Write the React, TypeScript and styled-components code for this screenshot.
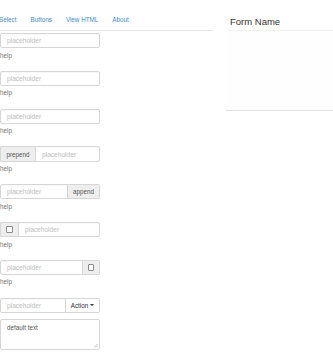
import React from "react";
import styled, { createGlobalStyle } from "styled-components";

const GlobalStyle = createGlobalStyle`
  html, body {
    margin: 0;
    padding: 0;
    background: #ffffff;
  }
  body {
    font-family: "Liberation Sans", Arial, sans-serif;
    color: #333333;
    overflow: hidden;
  }
`;

const Page = styled.div`
  display: flex;
  align-items: flex-start;
  gap: 15px;
  width: 333px;
  height: 360px;
  overflow: hidden;
`;

const LeftColumn = styled.div`
  width: 213px;
  flex-shrink: 0;
  display: flex;
  flex-direction: column;
`;

const Tabs = styled.ul`
  display: flex;
  list-style: none;
  margin: 0 0 2.5px 0;
  padding: 0;
  height: 29.5px;
  border-bottom: 1px solid #e6e6e6;
`;

const Tab = styled.li<{ $first?: boolean }>`
  display: flex;
  align-items: center;
  padding: 9px 7px 0 7px;
  margin-left: ${(p) => (p.$first ? "-8px" : "0")};
  font-size: 6.3px;
  color: #428bca;
  white-space: nowrap;
`;

const FormGroup = styled.div`
  width: 100px;
  margin-bottom: 6.75px;
`;

const InputGroup = styled.div`
  display: flex;
  height: 15.3px;
`;

const TextInput = styled.div<{ $joinLeft?: boolean; $joinRight?: boolean }>`
  flex: 1;
  min-width: 0;
  box-sizing: border-box;
  height: 15.3px;
  display: flex;
  align-items: center;
  padding: 0 6px;
  border: 1px solid #d6d6d6;
  border-radius: ${(p) =>
    `${p.$joinLeft ? 0 : 2}px ${p.$joinRight ? 0 : 2}px ${p.$joinRight ? 0 : 2}px ${p.$joinLeft ? 0 : 2}px`};
  box-shadow: inset 0 1px 1px rgba(0, 0, 0, 0.03);
  font-size: 6.6px;
  color: #bdbdbd;
  white-space: nowrap;
  background: #fff;
`;

const Addon = styled.div<{ $side: "left" | "right"; $width: number; $button?: boolean }>`
  flex-shrink: 0;
  box-sizing: border-box;
  width: ${(p) => p.$width}px;
  height: 15.3px;
  display: flex;
  align-items: center;
  justify-content: center;
  gap: 2px;
  background: ${(p) => (p.$button ? "#ffffff" : "#eeeeee")};
  border: 1px solid #d6d6d6;
  border-left-width: ${(p) => (p.$side === "right" ? 0 : 1)}px;
  border-right-width: ${(p) => (p.$side === "left" ? 0 : 1)}px;
  border-radius: ${(p) => (p.$side === "left" ? "2px 0 0 2px" : "0 2px 2px 0")};
  font-size: 6.3px;
  color: ${(p) => (p.$button ? "#333333" : "#555555")};
  white-space: nowrap;
`;

const Checkbox = styled.span`
  display: block;
  width: 4.5px;
  height: 4.5px;
  border: 1px solid #8a8a8a;
  border-radius: 1px;
  background: #fff;
`;

const Caret = styled.span`
  width: 0;
  height: 0;
  border-top: 2px solid #333;
  border-left: 2px solid transparent;
  border-right: 2px solid transparent;
`;

const Help = styled.p`
  margin: 2.25px 0 4.5px 0;
  font-size: 6.3px;
  line-height: 9px;
  color: #737373;
`;

const TextArea = styled.div`
  position: relative;
  box-sizing: border-box;
  width: 100px;
  height: 31.5px;
  margin-top: -0.75px;
  padding: 3px 6px;
  border: 1px solid #d6d6d6;
  border-radius: 2px;
  font-size: 6.3px;
  line-height: 9px;
  color: #555555;
`;

const Grip = styled.svg`
  position: absolute;
  right: 1px;
  bottom: 1px;
`;

const RightColumn = styled.div`
  flex: 1;
  display: flex;
  flex-direction: column;
  padding-top: 16px;
`;

const Legend = styled.div`
  height: 14px;
  border-bottom: 1px solid #f0f0f0;
  padding-left: 2px;
  font-size: 9.5px;
  line-height: 11px;
  color: #333333;
`;

const Canvas = styled.div`
  height: 79px;
  margin-left: -2px;
  border-bottom: 1px solid #e3e3e3;
  background: #fefefe;
`;

const Field: React.FC<{ children: React.ReactNode }> = ({ children }) => (
  <FormGroup>
    {children}
    <Help>help</Help>
  </FormGroup>
);

const App: React.FC = () => {
  return (
    <>
      <GlobalStyle />
      <Page>
        <LeftColumn>
          <Tabs>
            <Tab $first>Select</Tab>
            <Tab>Buttons</Tab>
            <Tab>View HTML</Tab>
            <Tab>About</Tab>
          </Tabs>

          <Field>
            <InputGroup>
              <TextInput>placeholder</TextInput>
            </InputGroup>
          </Field>
          <Field>
            <InputGroup>
              <TextInput>placeholder</TextInput>
            </InputGroup>
          </Field>
          <Field>
            <InputGroup>
              <TextInput>placeholder</TextInput>
            </InputGroup>
          </Field>
          <Field>
            <InputGroup>
              <Addon $side="left" $width={35}>prepend</Addon>
              <TextInput $joinLeft>placeholder</TextInput>
            </InputGroup>
          </Field>
          <Field>
            <InputGroup>
              <TextInput $joinRight>placeholder</TextInput>
              <Addon $side="right" $width={32}>append</Addon>
            </InputGroup>
          </Field>
          <Field>
            <InputGroup>
              <Addon $side="left" $width={18}>
                <Checkbox />
              </Addon>
              <TextInput $joinLeft>placeholder</TextInput>
            </InputGroup>
          </Field>
          <Field>
            <InputGroup>
              <TextInput $joinRight>placeholder</TextInput>
              <Addon $side="right" $width={17}>
                <Checkbox />
              </Addon>
            </InputGroup>
          </Field>
          <FormGroup>
            <InputGroup>
              <TextInput $joinRight>placeholder</TextInput>
              <Addon $side="right" $width={34} $button>
                Action <Caret />
              </Addon>
            </InputGroup>
          </FormGroup>
          <TextArea>
            default text
            <Grip width="5" height="5" viewBox="0 0 5 5">
              <path d="M4.5 1 L1 4.5 M4.5 3 L3 4.5" stroke="#999" strokeWidth="0.6" />
            </Grip>
          </TextArea>
        </LeftColumn>

        <RightColumn>
          <Legend>Form Name</Legend>
          <Canvas />
        </RightColumn>
      </Page>
    </>
  );
};

export default App;
